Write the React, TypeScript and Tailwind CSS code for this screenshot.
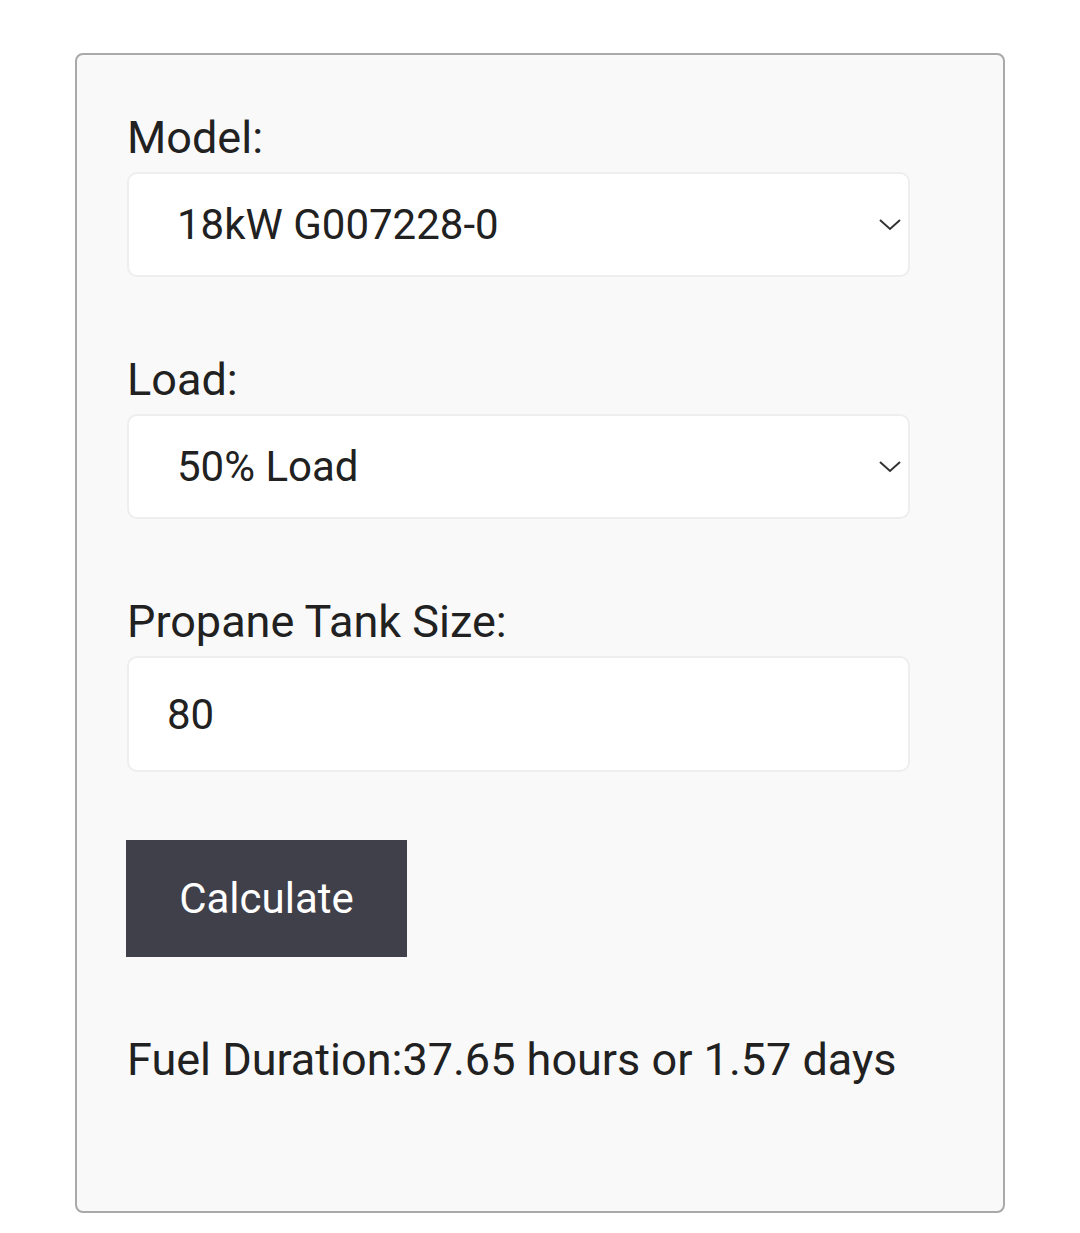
import React, { useState } from 'react';

const Chevron = () => (
  <svg
    className="pointer-events-none absolute right-[8px] top-1/2 -translate-y-1/2"
    width="24"
    height="14"
    viewBox="0 0 24 14"
    fill="none"
  >
    <path d="M2 2 L12 11 L22 2" stroke="#333" strokeWidth="2" />
  </svg>
);

const App: React.FC = () => {
  const [model, setModel] = useState('18kW G007228-0');
  const [load, setLoad] = useState('50% Load');
  const [tank, setTank] = useState('80');

  return (
    <div className="min-h-[1233px] bg-white pt-[53px] pl-[75px]" style={{ fontFamily: 'Roboto, "Noto Sans", sans-serif' }}>
      <div className="w-[930px] h-[1160px] border-2 border-[#a9a9a9] rounded-lg bg-[#f9f9f9] pt-[56px] pl-[50px] text-[#212121]">
        {/* Model */}
        <label className="block text-[45px] leading-[53px]">Model:</label>
        <div className="relative mt-[8px] w-[783px]">
          <select
            value={model}
            onChange={(e) => setModel(e.target.value)}
            className="appearance-none w-full h-[105px] bg-white border-2 border-[#eeeeee] rounded-[10px] pl-[48px] text-[42px] text-[#212121] outline-none"
          >
            <option>18kW G007228-0</option>
            <option>22kW G007043-0</option>
          </select>
          <Chevron />
        </div>

        {/* Load */}
        <label className="block mt-[76px] text-[45px] leading-[53px]">Load:</label>
        <div className="relative mt-[8px] w-[783px]">
          <select
            value={load}
            onChange={(e) => setLoad(e.target.value)}
            className="appearance-none w-full h-[105px] bg-white border-2 border-[#eeeeee] rounded-[10px] pl-[48px] text-[42px] text-[#212121] outline-none"
          >
            <option>50% Load</option>
            <option>100% Load</option>
          </select>
          <Chevron />
        </div>

        {/* Tank */}
        <label className="block mt-[76px] text-[45px] leading-[53px]">Propane Tank Size:</label>
        <input
          value={tank}
          onChange={(e) => setTank(e.target.value)}
          className="block mt-[8px] w-[783px] h-[116px] bg-white border-2 border-[#eeeeee] rounded-[10px] pl-[38px] text-[42px] text-[#212121] outline-none"
        />

        <button className="block mt-[68px] -ml-px w-[281px] h-[117px] bg-[#3f4049] text-white text-[42px]">
          Calculate
        </button>

        <div className="mt-[76px] text-[45px] leading-[53px]">Fuel Duration:37.65 hours or 1.57 days</div>
      </div>
    </div>
  );
};

export default App;
